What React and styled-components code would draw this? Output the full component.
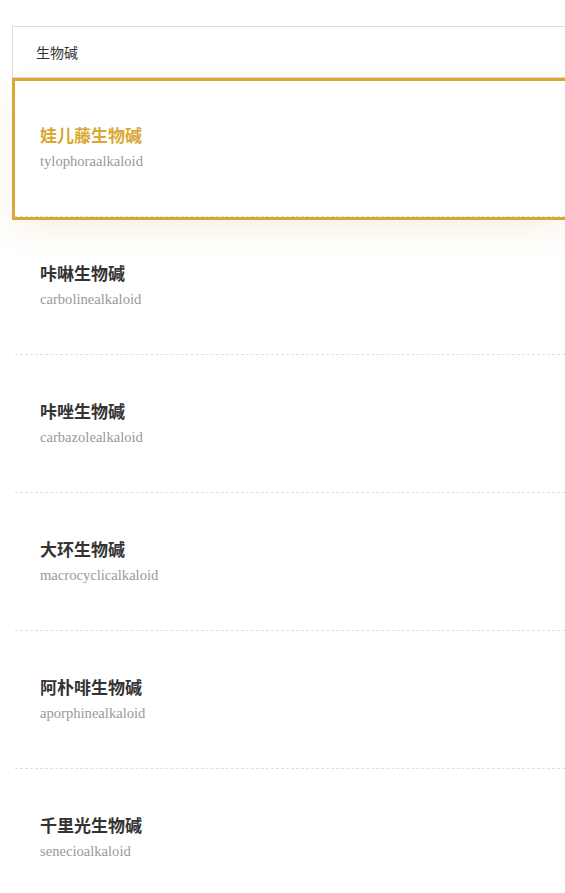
import React from "react";
import styled, { createGlobalStyle } from "styled-components";

const Global = createGlobalStyle`
  html, body { margin: 0; padding: 0; background: #fff; overflow: hidden; }
  body { font-family: "Noto Sans CJK SC", "Noto Sans", sans-serif; }
`;

const Page = styled.div`
  padding: 26px 0 0 12px;
`;

const Panel = styled.div`
  background: #fff;
`;

const Header = styled.div`
  height: 50px;
  display: flex;
  align-items: center;
  padding-left: 23px;
  font-size: 14px;
  color: #333;
  border: 1px solid #dddddd;
  border-right: none;
  font-family: "Noto Sans CJK SC", sans-serif;
`;

const List = styled.ul`
  list-style: none;
  margin: 0;
  padding: 3px 0 0 3px;
  display: flex;
  flex-direction: column;
  gap: 2px;
`;

const Item = styled.li`
  position: relative;
  height: 135px;
  box-sizing: content-box;
  padding-left: 25px;
  border-bottom: 1px dashed #e0e0e0;
  background: transparent;
  z-index: ${(p) => (p.$active ? 1 : 0)};
  ${(p) =>
    p.$active &&
    `
    background: #fff;
    box-shadow: 0 0 0 3px #d9a832, 0 12px 30px rgba(210, 170, 80, 0.16);
  `}
`;

const Title = styled.div`
  padding-top: 42px;
  font-size: 17px;
  line-height: 24px;
  font-weight: 700;
  color: ${(p) => (p.$active ? "#d9a832" : "#333333")};
  font-family: "Noto Sans CJK SC", sans-serif;
`;

const Sub = styled.div`
  margin-top: 3px;
  font-size: 14.6px;
  line-height: 22px;
  color: #999999;
  font-family: "Liberation Serif", serif;
`;

const items = [
  ["娃儿藤生物碱", "tylophoraalkaloid"],
  ["咔啉生物碱", "carbolinealkaloid"],
  ["咔唑生物碱", "carbazolealkaloid"],
  ["大环生物碱", "macrocyclicalkaloid"],
  ["阿朴啡生物碱", "aporphinealkaloid"],
  ["千里光生物碱", "senecioalkaloid"],
];

export default function App() {
  return (
    <Page>
      <Global />
      <Panel>
        <Header>生物碱</Header>
        <List>
          {items.map(([t, s], i) => (
            <Item key={t} $active={i === 0}>
              <Title $active={i === 0}>{t}</Title>
              <Sub>{s}</Sub>
            </Item>
          ))}
        </List>
      </Panel>
    </Page>
  );
}
